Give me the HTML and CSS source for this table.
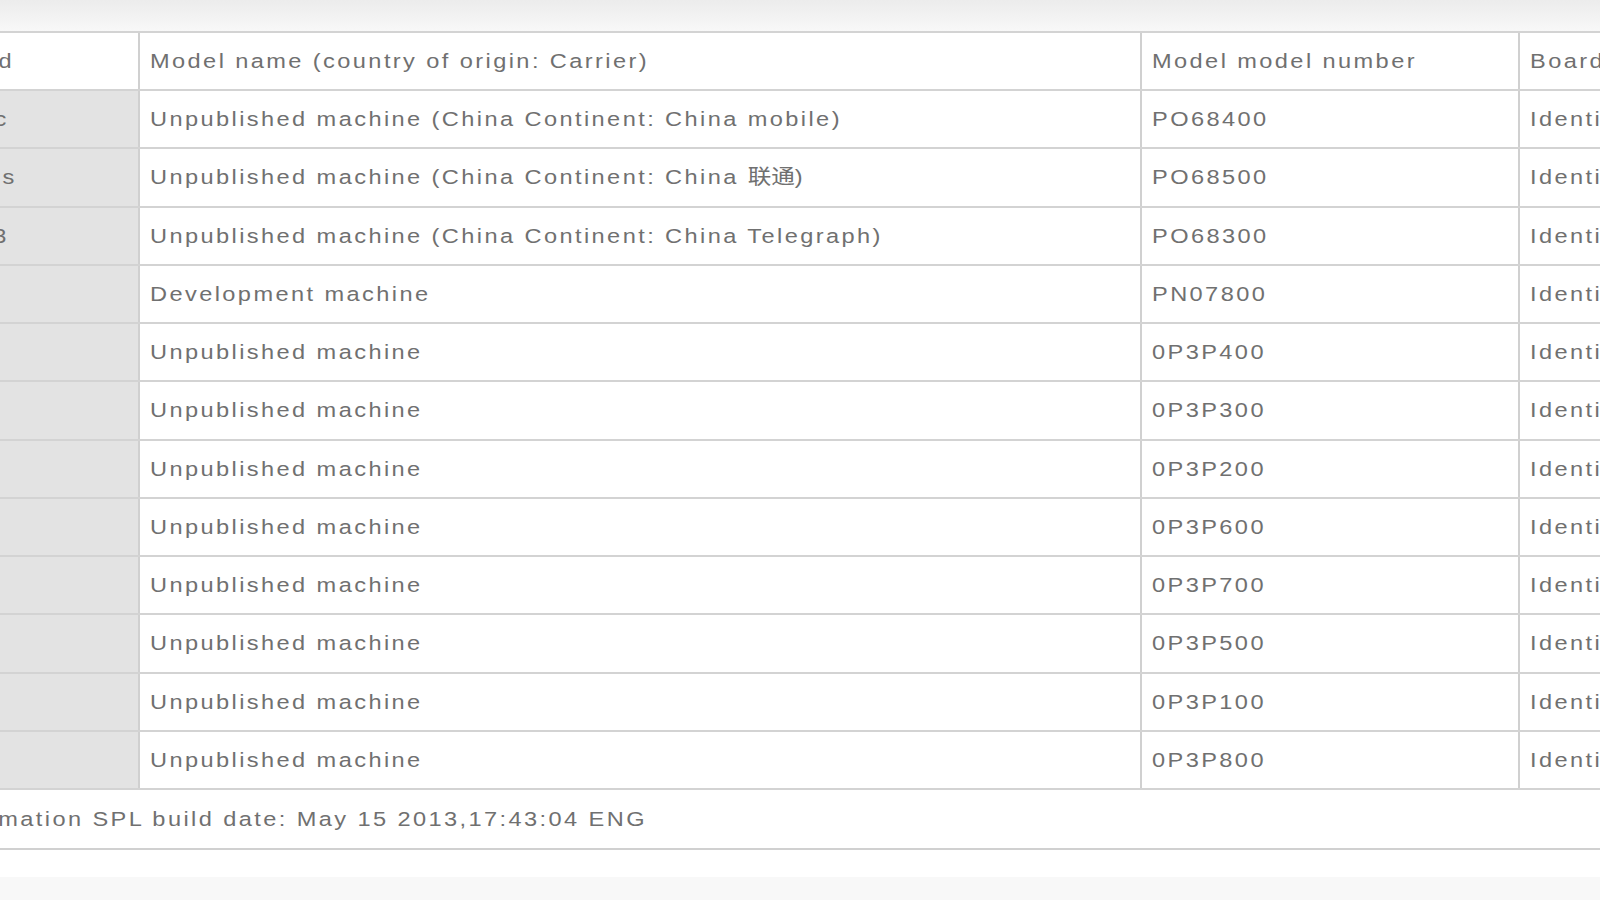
FILE: index.html
```html
<!DOCTYPE html>
<html lang="en">
<head>
<meta charset="utf-8">
<title>Model list</title>
<link rel="stylesheet" href="styles.css">
</head>
<body>
<div class="topbar"></div>
<div class="sheet">
  <div class="row head">
    <div class="cell c1 white"><span class="t">Board</span></div>
    <div class="cell"><span class="t">Model name (country of origin: Carrier)</span></div>
    <div class="cell"><span class="t">Model model number</span></div>
    <div class="cell"><span class="t">Board revision</span></div>
  </div>
  <div class="row">
    <div class="cell c1"><span class="t">Basic</span></div>
    <div class="cell"><span class="t">Unpublished machine (China Continent: China mobile)</span></div>
    <div class="cell"><span class="t">PO68400</span></div>
    <div class="cell"><span class="t">Identical</span></div>
  </div>
  <div class="row">
    <div class="cell c1"><span class="t">Specs</span></div>
    <div class="cell"><span class="t">Unpublished machine (China Continent: China&nbsp;<span class="cjk">联通</span>)</span></div>
    <div class="cell"><span class="t">PO68500</span></div>
    <div class="cell"><span class="t">Identical</span></div>
  </div>
  <div class="row">
    <div class="cell c1"><span class="t">Top 3</span></div>
    <div class="cell"><span class="t">Unpublished machine (China Continent: China Telegraph)</span></div>
    <div class="cell"><span class="t">PO68300</span></div>
    <div class="cell"><span class="t">Identical</span></div>
  </div>
  <div class="row">
    <div class="cell c1"></div>
    <div class="cell"><span class="t">Development machine</span></div>
    <div class="cell"><span class="t">PN07800</span></div>
    <div class="cell"><span class="t">Identical</span></div>
  </div>
  <div class="row">
    <div class="cell c1"></div>
    <div class="cell"><span class="t">Unpublished machine</span></div>
    <div class="cell"><span class="t">0P3P400</span></div>
    <div class="cell"><span class="t">Identical</span></div>
  </div>
  <div class="row">
    <div class="cell c1"></div>
    <div class="cell"><span class="t">Unpublished machine</span></div>
    <div class="cell"><span class="t">0P3P300</span></div>
    <div class="cell"><span class="t">Identical</span></div>
  </div>
  <div class="row">
    <div class="cell c1"></div>
    <div class="cell"><span class="t">Unpublished machine</span></div>
    <div class="cell"><span class="t">0P3P200</span></div>
    <div class="cell"><span class="t">Identical</span></div>
  </div>
  <div class="row">
    <div class="cell c1"></div>
    <div class="cell"><span class="t">Unpublished machine</span></div>
    <div class="cell"><span class="t">0P3P600</span></div>
    <div class="cell"><span class="t">Identical</span></div>
  </div>
  <div class="row">
    <div class="cell c1"></div>
    <div class="cell"><span class="t">Unpublished machine</span></div>
    <div class="cell"><span class="t">0P3P700</span></div>
    <div class="cell"><span class="t">Identical</span></div>
  </div>
  <div class="row">
    <div class="cell c1"></div>
    <div class="cell"><span class="t">Unpublished machine</span></div>
    <div class="cell"><span class="t">0P3P500</span></div>
    <div class="cell"><span class="t">Identical</span></div>
  </div>
  <div class="row">
    <div class="cell c1"></div>
    <div class="cell"><span class="t">Unpublished machine</span></div>
    <div class="cell"><span class="t">0P3P100</span></div>
    <div class="cell"><span class="t">Identical</span></div>
  </div>
  <div class="row">
    <div class="cell c1"></div>
    <div class="cell"><span class="t">Unpublished machine</span></div>
    <div class="cell"><span class="t">0P3P800</span></div>
    <div class="cell"><span class="t">Identical</span></div>
  </div>
  <div class="foot"><span class="t">Information SPL build date: May 15 2013,17:43:04 ENG</span></div>
</div>
<div class="bottom"></div>
<div class="bottom-band"></div>
</body>
</html>
```

FILE: styles.css
```css
html, body {
  margin: 0;
  padding: 0;
}
body {
  width: 1600px;
  height: 900px;
  overflow: hidden;
  background: #ffffff;
  font-family: "Liberation Sans", Arial, "Noto Sans CJK SC", sans-serif;
  font-size: 20.5px;
  letter-spacing: 2.1px;
  color: #707070;
}
.topbar {
  height: 31px;
  background: linear-gradient(#ececec, #f1f1f1 45%, #f8f8f8);
}
.sheet {
  margin-left: -71px;
  width: 1700px;
  border-top: 2px solid #d3d3d3;
}
.row {
  display: grid;
  grid-template-columns: 211px 1002px 378px 109px;
  height: 58.25px;
  box-sizing: border-box;
  border-bottom: 2px solid #d3d3d3;
}
.row.head {
  height: 58px;
}
.cell {
  display: flex;
  align-items: center;
  padding-left: 10px;
  white-space: nowrap;
  overflow: hidden;
  border-right: 2px solid #d0d0d0;
  background: #ffffff;
}
.cell.c1 {
  background: #e3e3e3;
}
.cell.c1.white {
  background: #ffffff;
}
.t {
  display: inline-block;
  transform: scaleX(1.15);
  transform-origin: left center;
  white-space: nowrap;
}
.cjk {
  font-family: "Noto Sans CJK SC", sans-serif;
  letter-spacing: 0;
  line-height: 1;
}
.foot {
  height: 60px;
  box-sizing: border-box;
  display: flex;
  align-items: center;
  padding-left: 10px;
  white-space: nowrap;
  overflow: hidden;
  border-bottom: 2px solid #d0d0d0;
}
.bottom {
  height: 27px;
}
.bottom-band {
  height: 30px;
  background: #f8f8f8;
}
```
